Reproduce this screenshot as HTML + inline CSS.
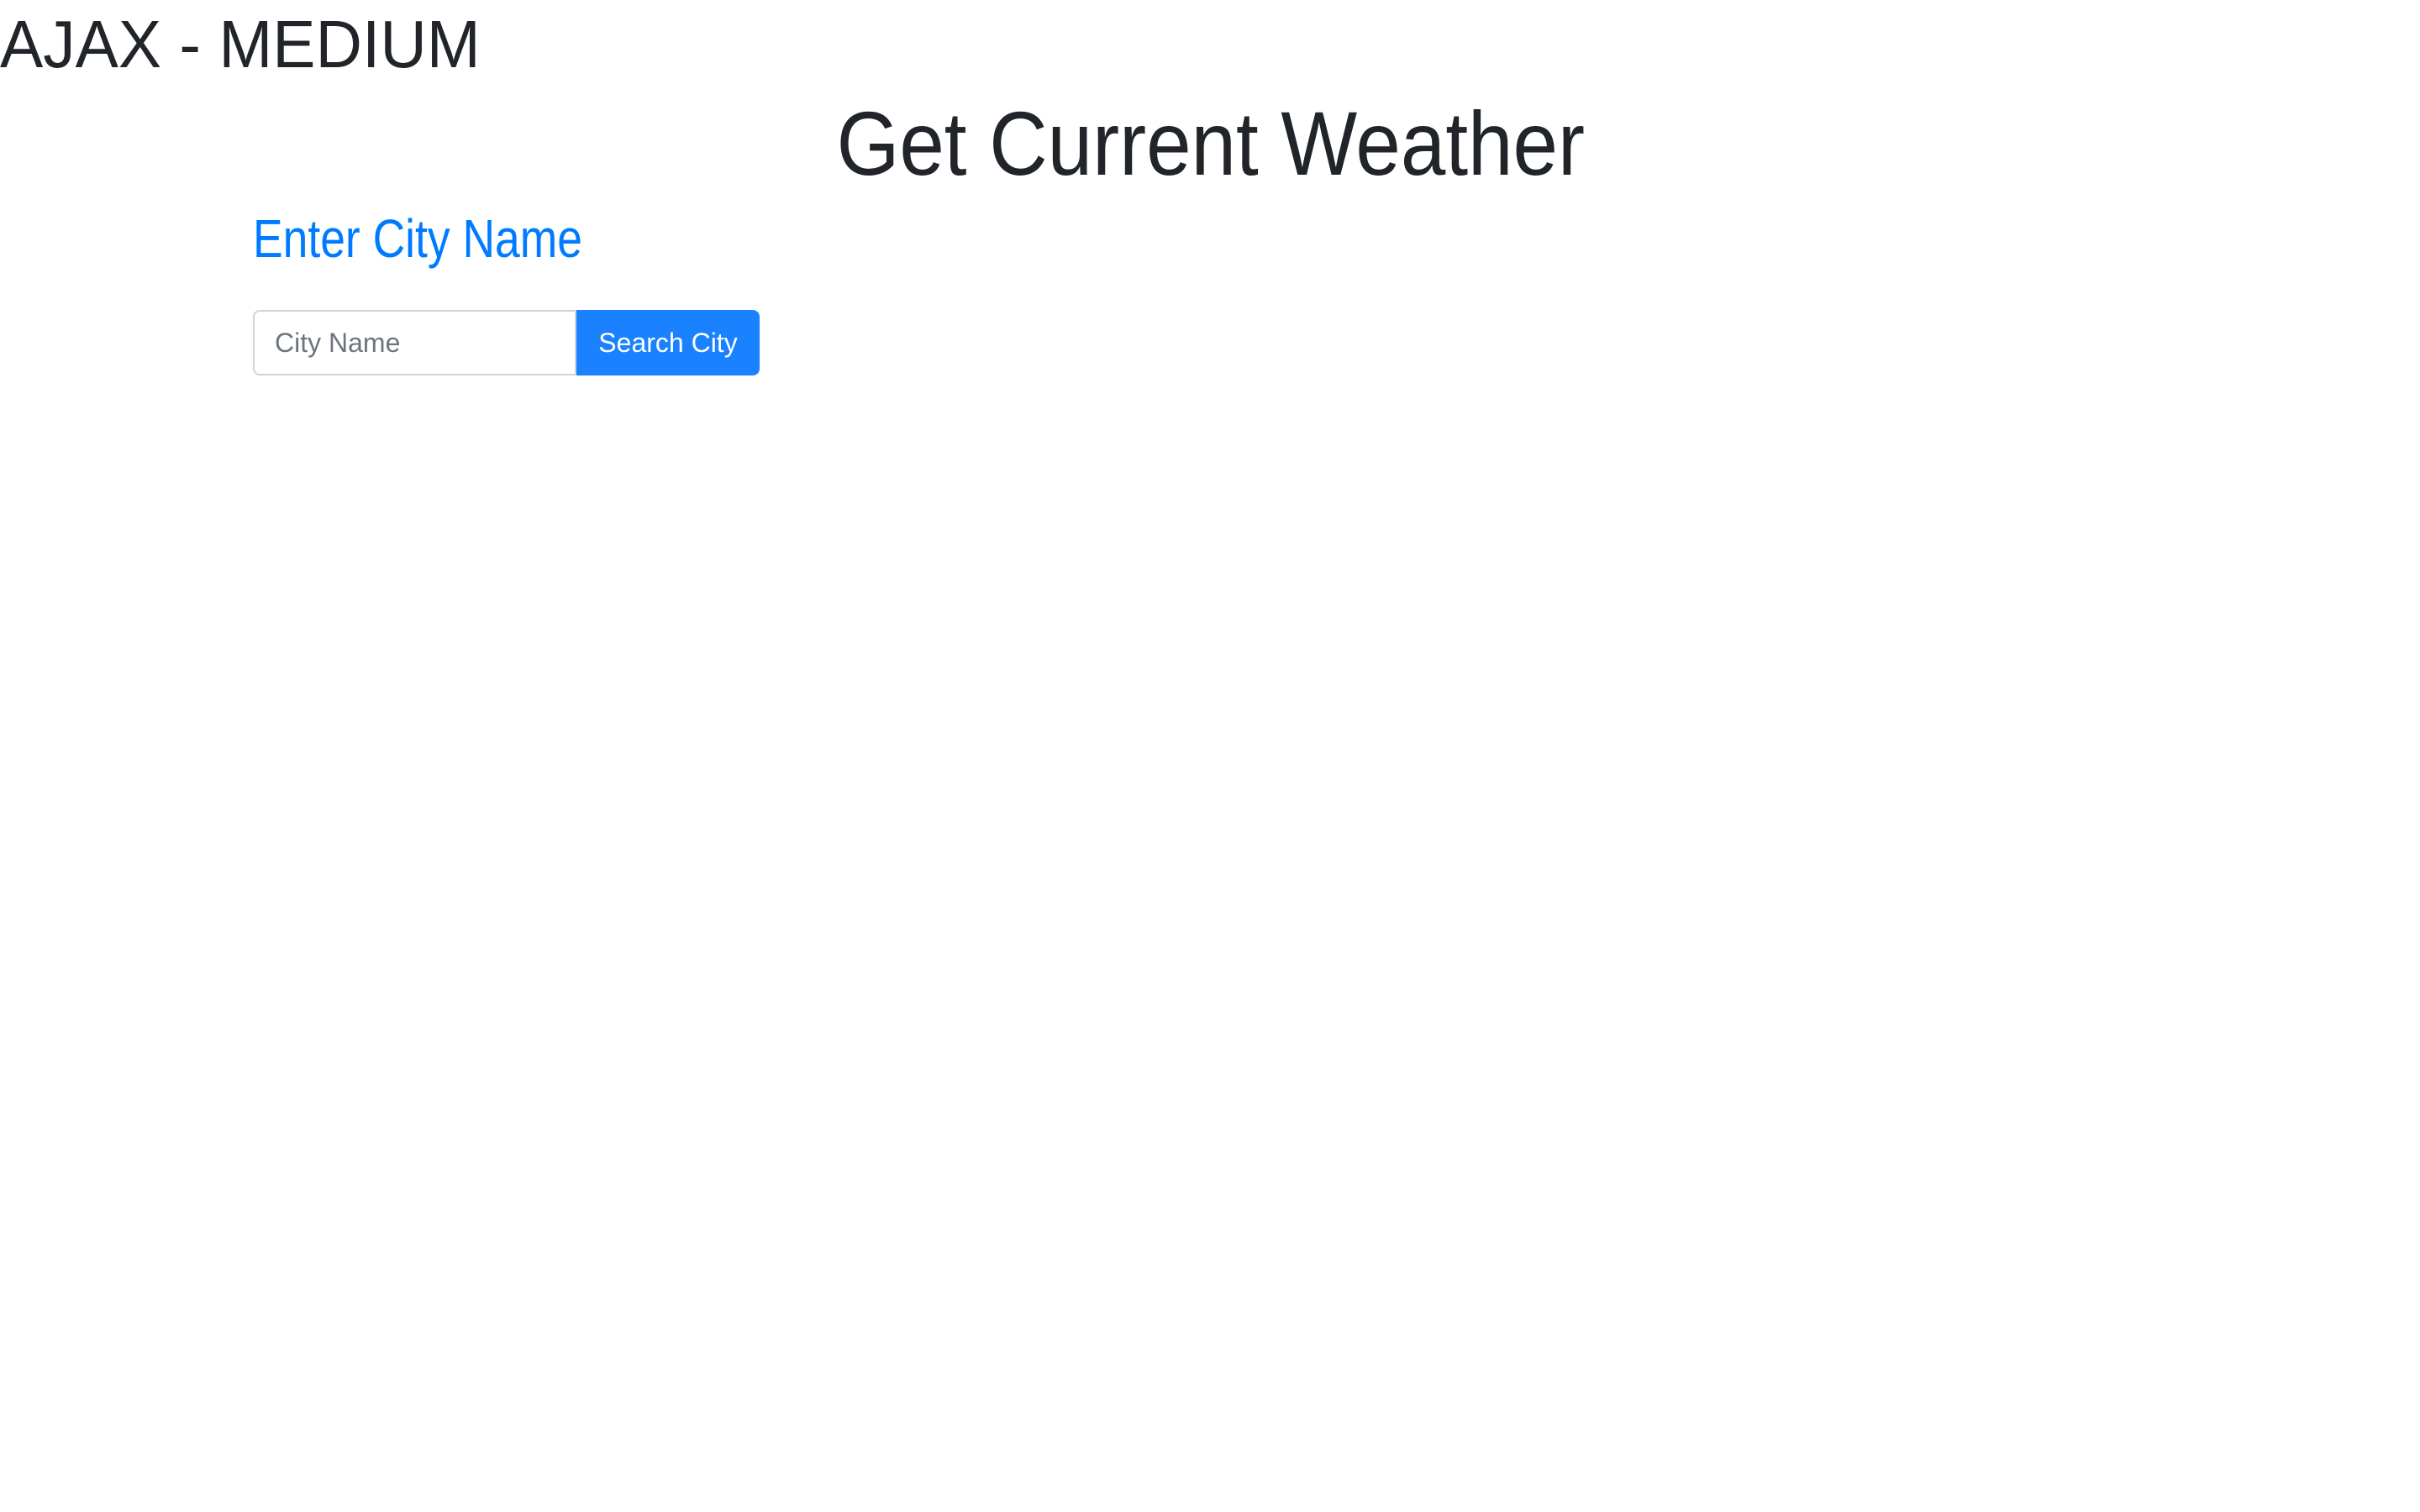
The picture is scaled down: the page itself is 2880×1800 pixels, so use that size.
<!DOCTYPE html>
<html><head><meta charset="utf-8"><style>
html,body{margin:0;padding:0;background:#fff;width:2880px;height:1800px;overflow:hidden;font-family:"Liberation Sans",sans-serif;color:#212529}
.a{position:absolute;line-height:1;white-space:nowrap}
#t1{left:0;top:13px;font-size:80px;transform:scaleX(0.96);transform-origin:0 0}
#t2{left:0;width:2880px;text-align:center;top:117px;font-size:108px;transform:scaleX(0.89);transform-origin:1447px 0}
#t3{left:301px;top:252px;font-size:64px;color:#007bff;transform:scaleX(0.835);transform-origin:0 0}
#inp{position:absolute;left:301px;top:369px;width:381px;height:74px;border:2px solid #ced4da;border-radius:8px 0 0 8px;background:#fff}
#inp span{position:absolute;left:24px;top:19px;font-size:32px;line-height:36px;color:#6c757d}
#btn{position:absolute;left:686px;top:369px;width:218px;height:78px;background:#1a82ff;border-radius:0 8px 8px 0;color:#fff;font-size:32px;line-height:78px;text-align:center}
</style></head><body>
<div class="a" id="t1">AJAX - MEDIUM</div>
<div class="a" id="t2">Get Current Weather</div>
<div class="a" id="t3">Enter City Name</div>
<div id="inp"><span>City Name</span></div>
<div id="btn">Search City</div>
</body></html>
